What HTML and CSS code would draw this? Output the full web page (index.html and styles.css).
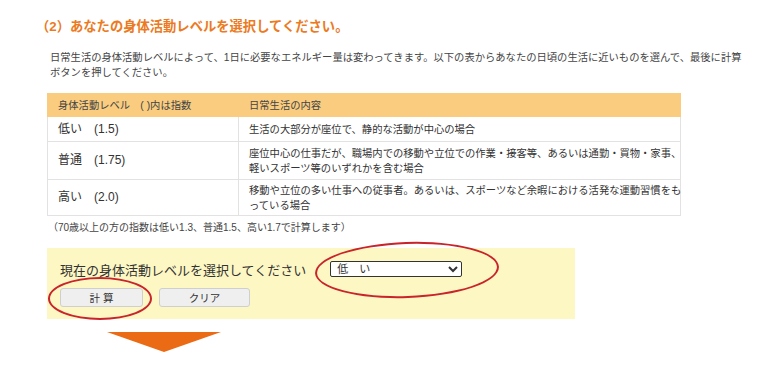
FILE: index.html
```html
<!DOCTYPE html>
<html lang="ja">
<head>
    <meta charset="UTF-8">
    <meta name="viewport" content="width=device-width, initial-scale=1.0">
    <title>身体活動レベル</title>
    <link rel="stylesheet" href="styles.css">
</head>
<body>
    <div class="page">
        <h2 class="step-title">（2）あなたの身体活動レベルを選択してください。</h2>

        <p class="lead">日常生活の身体活動レベルによって、1日に必要なエネルギー量は変わってきます。以下の表からあなたの日頃の生活に近いものを選んで、最後に計算<br>ボタンを押してください。</p>

        <table class="level-table">
            <thead>
                <tr>
                    <th class="col-level">身体活動レベル　( )内は指数</th>
                    <th>日常生活の内容</th>
                </tr>
            </thead>
            <tbody>
                <tr class="row-1">
                    <td>低い　(1.5)</td>
                    <td>生活の大部分が座位で、静的な活動が中心の場合</td>
                </tr>
                <tr class="row-2">
                    <td>普通　(1.75)</td>
                    <td>座位中心の仕事だが、職場内での移動や立位での作業・接客等、あるいは通勤・買物・家事、<br>軽いスポーツ等のいずれかを含む場合</td>
                </tr>
                <tr class="row-3">
                    <td>高い　(2.0)</td>
                    <td>移動や立位の多い仕事への従事者。あるいは、スポーツなど余暇における活発な運動習慣をも<br>っている場合</td>
                </tr>
            </tbody>
        </table>

        <p class="note">（70歳以上の方の指数は低い1.3、普通1.5、高い1.7で計算します）</p>

        <div class="select-box">
            <div class="select-row">
                <label for="level">現在の身体活動レベルを選択してください</label>
                <select id="level" class="level-select">
                    <option>低　い</option>
                    <option>普　通</option>
                    <option>高　い</option>
                </select>
            </div>
            <div class="button-row">
                <button class="btn btn-calc">計 算</button>
                <button class="btn btn-clear">クリア</button>
            </div>

            <!-- red marks drawn over the form -->
            <span class="mark mark-select"></span>
            <span class="mark mark-calc"></span>
        </div>

        <div class="arrow-down"></div>
    </div>
</body>
</html>
```

FILE: styles.css
```css
body {
    margin: 0;
    background-color: #ffffff;
    color: #333;
    font-family: "Liberation Sans", "Noto Sans CJK JP", sans-serif;
}
.page {
    padding: 17px 0 0 36px;
}
.step-title {
    margin: 0;
    font-size: 13.3px;
    line-height: 20px;
    font-weight: bold;
    color: #ec7a1e;
}
.lead {
    margin: 13px 0 0 14px;
    font-size: 10.3px;
    line-height: 15px;
    color: #444;
    white-space: nowrap;
}
.level-table {
    margin: 13px 0 0 11px;
    width: 634px;
    table-layout: fixed;
    border-collapse: collapse;
    font-size: 10.3px;
    color: #333;
}
.level-table th,
.level-table td {
    border: 1px solid #e2e2e2;
    padding: 0 10px;
    text-align: left;
    line-height: 15px;
    white-space: nowrap;
}
.level-table th {
    height: 22px;
    background-color: #f9cc80;
    border-color: #f9cc80;
    font-weight: normal;
    color: #444;
}
.level-table .col-level {
    width: 170px;
}
.level-table td:first-child {
    font-size: 12px;
}
.row-1 td {
    height: 24px;
}
.row-2 td {
    height: 37px;
}
.row-3 td {
    height: 35px;
}
.note {
    margin: 5px 0 0 12px;
    font-size: 10px;
    line-height: 14px;
    color: #444;
}
.select-box {
    position: relative;
    margin: 13px 0 0 11px;
    width: 528px;
    padding: 12px 13px 12px;
    box-sizing: border-box;
    background-color: #fdf7c3;
}
.select-row {
    display: flex;
    align-items: center;
    gap: 24px;
    height: 18px;
}
.select-row label {
    font-size: 13px;
    color: #333;
}
.level-select {
    width: 132px;
    height: 16px;
    padding: 0 2px;
    font-size: 11px;
    font-family: "Liberation Sans", "Noto Sans CJK JP", sans-serif;
    border: 1px solid #333;
    border-radius: 2px;
    background-color: #fff;
    color: #333;
}
.button-row {
    display: flex;
    gap: 16px;
    margin-top: 10px;
}
.btn {
    height: 19px;
    padding: 0;
    font-size: 10.5px;
    font-family: "Liberation Sans", "Noto Sans CJK JP", sans-serif;
    color: #333;
    background-color: #efefef;
    border: 1px solid #cfcfcf;
    border-radius: 3px;
    cursor: pointer;
}
.btn-calc {
    width: 83px;
}
.btn-clear {
    width: 91px;
}
.mark {
    position: absolute;
    border: 2px solid #c9232b;
    border-radius: 50%;
    box-sizing: border-box;
}
.mark-select {
    left: 268px;
    top: -6px;
    width: 184px;
    height: 56px;
    transform: rotate(-2deg);
}
.mark-calc {
    left: 1px;
    top: 29px;
    width: 104px;
    height: 43px;
}
.arrow-down {
    margin: 13px 0 0 71px;
    width: 0;
    height: 0;
    border-left: 57px solid transparent;
    border-right: 57px solid transparent;
    border-top: 20px solid #eb6a14;
}
```
